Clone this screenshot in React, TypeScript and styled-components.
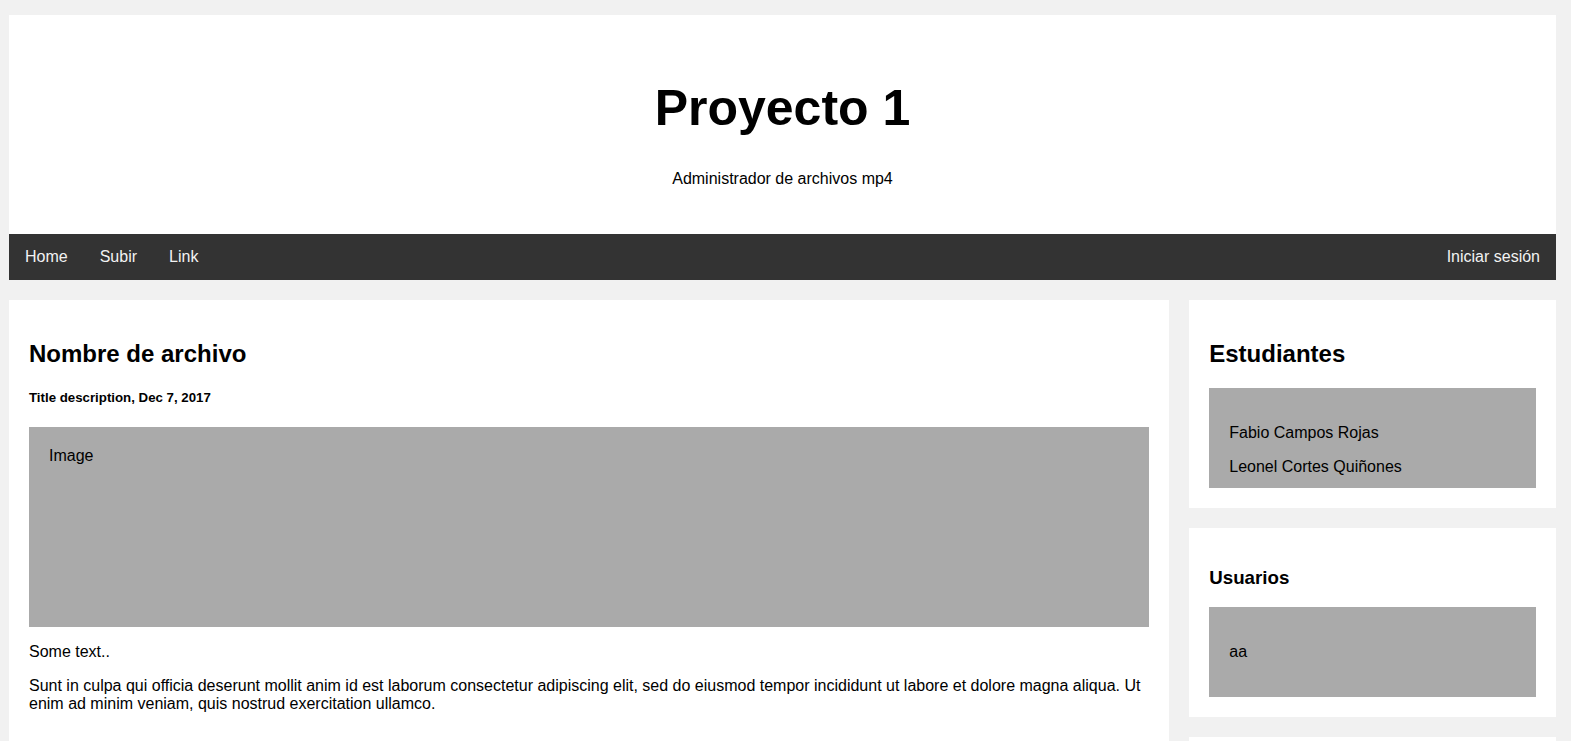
import React from "react";
import styled, { createGlobalStyle } from "styled-components";

const GlobalStyle = createGlobalStyle`
  * { box-sizing: border-box; }
  body {
    margin: 0;
    padding: 15px 15px 0 9px;
    background: #f1f1f1;
    font-family: "Liberation Sans", Arial, sans-serif;
    font-size: 16px;
    color: #000;
  }
`;

const Header = styled.header`
  padding: 30px;
  text-align: center;
  background: #fff;
`;

const Title = styled.h1`
  font-size: 50px;
  margin: 33.5px 0;
  font-weight: bold;
`;

const Subtitle = styled.p`
  margin: 16px 0;
`;

const TopNav = styled.nav`
  display: flex;
  background-color: #333;
`;

const NavLink = styled.a<{ $right?: boolean }>`
  display: block;
  color: #f2f2f2;
  text-align: center;
  padding: 14px 16px;
  text-decoration: none;
  line-height: 18px;
  margin-left: ${(p) => (p.$right ? "auto" : "0")};
`;

const Row = styled.div`
  display: flex;
  align-items: flex-start;
`;

const LeftColumn = styled.div`
  width: 75%;
`;

const RightColumn = styled.div`
  width: 25%;
  padding-left: 20px;
`;

const Card = styled.section`
  background-color: #fff;
  padding: 20px;
  margin-top: 20px;
  display: flow-root;
`;

const CardTitle = styled.h2`
  font-size: 24px;
  margin: 19.92px 0;
`;

const CardSubtitle = styled.h3`
  font-size: 18.72px;
  margin: 18.72px 0;
`;

const Meta = styled.h5`
  font-size: 13.28px;
  margin: 22.18px 0;
`;

const FakeImg = styled.div<{ $h?: number }>`
  background-color: #aaa;
  width: 100%;
  padding: 20px;
  height: ${(p) => (p.$h ? `${p.$h}px` : "auto")};
`;

const Text = styled.p`
  margin: 16px 0;
`;

const FirstText = styled.p`
  margin: 0;
`;

export default function App() {
  return (
    <>
      <GlobalStyle />
      <Header>
        <Title>Proyecto 1</Title>
        <Subtitle>Administrador de archivos mp4</Subtitle>
      </Header>
      <TopNav>
        <NavLink href="#">Home</NavLink>
        <NavLink href="#">Subir</NavLink>
        <NavLink href="#">Link</NavLink>
        <NavLink href="#" $right>
          Iniciar sesión
        </NavLink>
      </TopNav>
      <Row>
        <LeftColumn>
          <Card>
            <CardTitle>Nombre de archivo</CardTitle>
            <Meta>Title description, Dec 7, 2017</Meta>
            <FakeImg $h={200}>
              <FirstText>Image</FirstText>
            </FakeImg>
            <Text>Some text..</Text>
            <Text>
              Sunt in culpa qui officia deserunt mollit anim id est laborum
              consectetur adipiscing elit, sed do eiusmod tempor incididunt ut
              labore et dolore magna aliqua. Ut enim ad minim veniam, quis
              nostrud exercitation ullamco.
            </Text>
          </Card>
        </LeftColumn>
        <RightColumn>
          <Card>
            <CardTitle>Estudiantes</CardTitle>
            <FakeImg $h={100}>
              <Text>Fabio Campos Rojas</Text>
              <Text>Leonel Cortes Quiñones</Text>
            </FakeImg>
          </Card>
          <Card>
            <CardSubtitle>Usuarios</CardSubtitle>
            <FakeImg>
              <Text>aa</Text>
            </FakeImg>
          </Card>
          <Card>
            <CardSubtitle>Follow Me</CardSubtitle>
            <Text>Some text..</Text>
          </Card>
        </RightColumn>
      </Row>
    </>
  );
}
